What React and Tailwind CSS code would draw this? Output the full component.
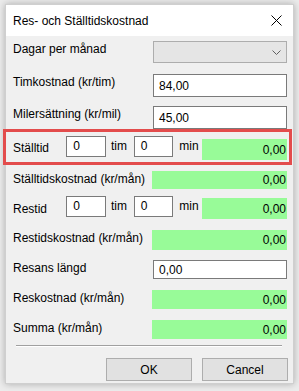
import React from "react";

const font = { fontFamily: '"Liberation Sans", Arial, sans-serif' };

function Green({ w = "w-[135px]", h = "h-[19px]" }) {
  return (
    <div className={`${w} ${h} bg-[#98fb98] flex items-center justify-end text-[12px] leading-[14px] pr-[1px]`}>0,00</div>
  );
}

function TextBox({ value, h = "h-[23px]" }) {
  return (
    <div className={`w-[134px] ${h} bg-white border border-[#7a7a7a] flex items-center pl-[5px] text-[12px] leading-[14px]`}>{value}</div>
  );
}

function Small() {
  return (
    <div className="w-[40px] h-[21px] bg-white border border-[#7a7a7a] pl-[6px] pt-[2px] text-[12px] leading-[14px]">0</div>
  );
}

function Label({ children }) {
  return <div className="flex-1 text-[12px] leading-[16px] pl-[7px]">{children}</div>;
}

export default function App() {
  return (
    <div className="w-[299px] h-[391px] bg-[#ececec] pl-[5px] pt-[4px] relative text-black" style={font}>
      <div className="w-[289px] h-[380px] bg-[#f0f0f0] border border-[#cfcfcf] shadow-[0_0_7px_rgba(0,0,0,0.28)] flex flex-col">
        <div className="h-[31px] bg-white flex items-center justify-between pl-[7px] pr-[10px]">
          <span className="text-[12px] leading-[16px] pt-[1px]">Res- och Ställtidskostnad</span>
          <svg width="11" height="11" viewBox="0 0 11 11" className="mr-[1px]">
            <path d="M0.5 0.5 L10.5 10.5 M10.5 0.5 L0.5 10.5" stroke="#000" strokeWidth="1" fill="none" />
          </svg>
        </div>
        <div className="flex flex-col pr-[6px]">
          <div className="flex items-start mt-[5px] h-[22px]">
            <Label>Dagar per månad</Label>
            <div className="w-[134px] h-[22px] bg-[#e5e5e5] border border-[#adadad] flex items-center justify-end pr-[5px]">
              <svg width="9" height="5" viewBox="0 0 9 5">
                <path d="M0.5 0.5 L4.5 4.5 L8.5 0.5" stroke="#606060" strokeWidth="1" fill="none" />
              </svg>
            </div>
          </div>
          <div className="flex items-start mt-[11px]">
            <Label>Timkostnad (kr/tim)</Label>
            <TextBox value="84,00" />
          </div>
          <div className="flex items-start mt-[9px]">
            <Label>Milersättning (kr/mil)</Label>
            <TextBox value="45,00" />
          </div>
          <div className="flex items-start mt-[7px] h-[24px]">
            <div className="w-[61px] text-[12px] leading-[16px] pl-[7px] pt-[4px]">Ställtid</div>
            <Small />
            <div className="w-[28px] text-[12px] leading-[16px] pl-[5px] pt-[2px]">tim</div>
            <Small />
            <div className="w-[29px] text-[12px] leading-[16px] pl-[6px] pt-[2px]">min</div>
            <div className="mt-[3px]"><Green w="w-[85px]" h="h-[21px]" /></div>
          </div>
          <div className="flex items-start mt-[11px]">
            <Label>Ställtidskostnad (kr/mån)</Label>
            <Green h="h-[18px]" />
          </div>
          <div className="flex items-start mt-[7px] h-[23px]">
            <div className="w-[61px] text-[12px] leading-[16px] pl-[7px] pt-[5px]">Restid</div>
            <Small />
            <div className="w-[28px] text-[12px] leading-[16px] pl-[5px] pt-[2px]">tim</div>
            <Small />
            <div className="w-[29px] text-[12px] leading-[16px] pl-[6px] pt-[2px]">min</div>
            <div className="mt-[2px]"><Green w="w-[85px]" h="h-[21px]" /></div>
          </div>
          <div className="flex items-start mt-[11px]">
            <Label>Restidskostnad (kr/mån)</Label>
            <Green h="h-[20px]" />
          </div>
          <div className="flex items-start mt-[10px]">
            <Label>Resans längd</Label>
            <TextBox value="0,00" h="h-[19px]" />
          </div>
          <div className="flex items-start mt-[11px]">
            <Label>Reskostnad (kr/mån)</Label>
            <Green />
          </div>
          <div className="flex items-start mt-[11px]">
            <Label>Summa (kr/mån)</Label>
            <Green />
          </div>
        </div>
        <div className="mt-[6px] ml-[10px] mr-[11px] h-[2px] border-t border-[#a0a0a0] border-b border-b-white"></div>
        <div className="flex justify-end gap-[10px] mt-[11px] pr-[5px]">
          <button className="w-[86px] h-[23px] bg-[#e1e1e1] border border-[#adadad] text-[12px] leading-[14px]" style={font}>OK</button>
          <button className="w-[86px] h-[23px] bg-[#e1e1e1] border border-[#adadad] text-[12px] leading-[14px]" style={font}>Cancel</button>
        </div>
      </div>
      <div className="absolute left-[3px] top-[129px] w-[289px] h-[36px] border-[3px] border-[#e34c4c] pointer-events-none"></div>
    </div>
  );
}
